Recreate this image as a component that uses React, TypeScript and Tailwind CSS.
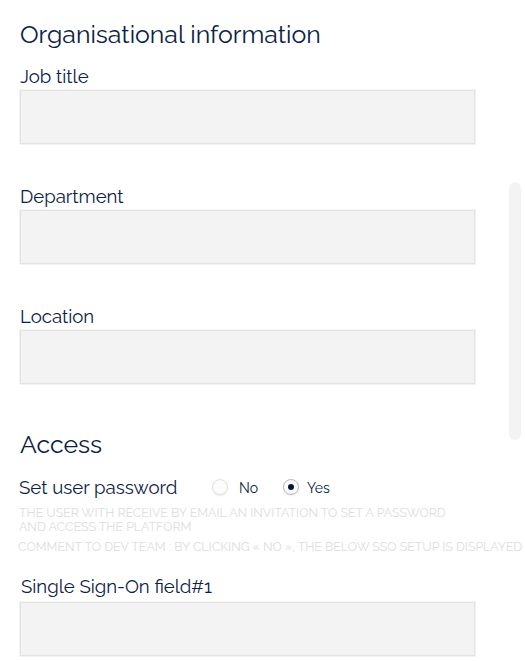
type FieldProps = { label: string; className?: string; labelClass?: string };

function Field({ label, className = "", labelClass = "leading-5" }: FieldProps) {
  return (
    <label className={`block w-[455px] ${className}`}>
      <span className={`block h-6 whitespace-nowrap pt-px text-[18.6px] ${labelClass}`}>{label}</span>
      <input
        type="text"
        className="block h-[54px] w-full border border-[#e2e2e2] bg-[#f3f3f3] px-3 shadow-[0_0_0_1px_#f3f3f3] outline-none"
      />
    </label>
  );
}

function Radio({ checked = false }: { checked?: boolean }) {
  return (
    <span
      className={`flex size-4 shrink-0 items-center justify-center rounded-full border bg-[#fcfcfd] shadow-[0_1px_2px_rgba(0,0,0,0.08)] ${
        checked ? "border-[#b5b8c8]" : "border-[#e3e3e7]"
      }`}
    >
      {checked && <span className="size-1.5 rounded-full bg-[#04173d]" />}
    </span>
  );
}

export default function App() {
  return (
    <main className="flex h-[662px] w-[525px] overflow-hidden bg-white font-['Raleway','Lato',sans-serif] text-[#0b2146]">
      <div className="w-[509px] shrink-0 pl-5 pt-5">
        <h1 className="h-[46px] whitespace-nowrap text-[24.88px] leading-[30px]">Organisational information</h1>
        <Field label="Job title" />
        <Field label="Department" className="mt-[42px]" />
        <Field label="Location" className="mt-[42px]" />
        <h2 className="mt-[46px] h-[45px] whitespace-nowrap text-[24.88px] leading-[30px]">Access</h2>
        <div className="-ml-px flex h-6 items-center whitespace-nowrap">
          <span className="w-[193px] text-[18.66px] leading-6">Set user password</span>
          <Radio />
          <span className="ml-[11px] mt-px w-[44px] text-[14px] leading-5">No</span>
          <Radio checked />
          <span className="ml-2 mt-px text-[14px] leading-5">Yes</span>
        </div>
        <p className="-ml-px mt-[7px] whitespace-nowrap text-[12.38px] leading-[14px] text-[#dddddd]">
          <span className="block">THE USER WITH RECEIVE BY EMAIL AN INVITATION TO SET A PASSWORD</span>
          <span className="block">AND ACCESS THE PLATFORM</span>
        </p>
        <p className="-ml-0.5 mt-1.5 whitespace-nowrap text-[12.38px] leading-[14px] text-[#dddddd]">
          COMMENT TO DEV TEAM : BY CLICKING « NO », THE BELOW SSO SETUP IS DISPLAYED
        </p>
        <Field className="mt-6" labelClass="pl-px leading-4" label="Single Sign-On field#1" />
      </div>
      <div className="mt-[182px] h-[258px] w-3 shrink-0 rounded-full bg-[#f3f3f3]" />
    </main>
  );
}
